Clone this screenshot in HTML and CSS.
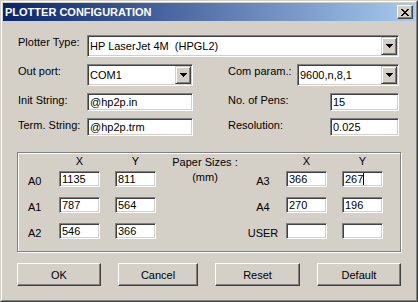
FILE: index.html
```html
<!DOCTYPE html>
<html>
<head>
<meta charset="utf-8">
<title>Plotter Configuration</title>
<link rel="stylesheet" href="styles.css">
</head>
<body>
<div class="window">
  <div class="frame">
    <div class="titlebar">
      <span class="title">PLOTTER CONFIGURATION</span>
      <span class="close">
        <svg width="8" height="7" viewBox="0 0 8 7" shape-rendering="crispEdges">
          <path d="M0 0h2v1h-2zM6 0h2v1h-2zM1 1h2v1h-2zM5 1h2v1h-2zM2 2h4v1h-4zM3 3h2v1h-2zM2 4h4v1h-4zM1 5h2v1h-2zM5 5h2v1h-2zM0 6h2v1h-2zM6 6h2v1h-2z" fill="#000"/>
        </svg>
      </span>
    </div>
    <div class="content">
      <div class="form">
        <span class="lbl c1">Plotter Type:</span>
        <div class="combo span">
          <span class="combo-text">HP LaserJet 4M&nbsp; (HPGL2)</span>
          <span class="drop"><svg width="7" height="4" viewBox="0 0 7 4" shape-rendering="crispEdges"><path d="M0 0h7v1h-7zM1 1h5v1h-5zM2 2h3v1h-3zM3 3h1v1h-1z" fill="#000"/></svg></span>
        </div>

        <span class="lbl c1">Out port:</span>
        <div class="combo c2">
          <span class="combo-text">COM1</span>
          <span class="drop"><svg width="7" height="4" viewBox="0 0 7 4" shape-rendering="crispEdges"><path d="M0 0h7v1h-7zM1 1h5v1h-5zM2 2h3v1h-3zM3 3h1v1h-1z" fill="#000"/></svg></span>
        </div>
        <span class="lbl c4">Com param.:</span>
        <div class="combo c5">
          <span class="combo-text">9600,n,8,1</span>
          <span class="drop"><svg width="7" height="4" viewBox="0 0 7 4" shape-rendering="crispEdges"><path d="M0 0h7v1h-7zM1 1h5v1h-5zM2 2h3v1h-3zM3 3h1v1h-1z" fill="#000"/></svg></span>
        </div>

        <span class="lbl c1">Init String:</span>
        <span class="field c2">@hp2p.in</span>
        <span class="lbl c4">No. of Pens:</span>
        <span class="field c5 short">15</span>

        <span class="lbl c1">Term. String:</span>
        <span class="field c2">@hp2p.trm</span>
        <span class="lbl c4">Resolution:</span>
        <span class="field c5 short">0.025</span>
      </div>

      <div class="group">
        <span class="hdr g2">X</span>
        <span class="hdr g3">Y</span>
        <span class="paper">Paper Sizes :<br>(mm)</span>
        <span class="hdr g6">X</span>
        <span class="hdr g7">Y</span>

        <span class="glbl g1 r2">A0</span>
        <span class="sfield g2 r2">1135</span>
        <span class="sfield g3 r2">811</span>
        <span class="glbl g5 r2">A3</span>
        <span class="sfield g6 r2">366</span>
        <span class="sfield g7 r2">267<span class="caret"></span></span>

        <span class="glbl g1 r3">A1</span>
        <span class="sfield g2 r3">787</span>
        <span class="sfield g3 r3">564</span>
        <span class="glbl g5 r3">A4</span>
        <span class="sfield g6 r3">270</span>
        <span class="sfield g7 r3">196</span>

        <span class="glbl g1 r4">A2</span>
        <span class="sfield g2 r4">546</span>
        <span class="sfield g3 r4">366</span>
        <span class="glbl g5 r4">USER</span>
        <span class="sfield g6 r4"></span>
        <span class="sfield g7 r4"></span>
      </div>

      <div class="buttons">
        <span class="btn w-ok">OK</span>
        <span class="btn w-cancel">Cancel</span>
        <span class="btn w-reset">Reset</span>
        <span class="btn w-default">Default</span>
      </div>
    </div>
  </div>
</div>
</body>
</html>
```
FILE: styles.css
```css
* { box-sizing: border-box; }
html, body { margin: 0; padding: 0; background: #d4d0c8; }
body {
  font-family: "Liberation Sans", Arial, sans-serif;
  font-size: 11px;
  color: #000;
}
.window {
  width: 418px;
  height: 302px;
  border: 1px solid;
  border-color: #d4d0c8 #404040 #404040 #d4d0c8;
  background: #d4d0c8;
}
.frame {
  height: 100%;
  border: 1px solid;
  border-color: #fff #808080 #808080 #fff;
  padding: 1px;
}
.titlebar {
  height: 18px;
  display: flex;
  align-items: center;
  justify-content: space-between;
  background: linear-gradient(to right, #0a246a, #a6caf0);
  padding: 0 2px;
}
.title {
  color: #fff;
  font-weight: bold;
  font-size: 11px;
  line-height: 13px;
  white-space: nowrap;
}
.close {
  width: 16px;
  height: 14px;
  display: flex;
  align-items: center;
  justify-content: center;
  background: #d4d0c8;
  border: 1px solid;
  border-color: #fff #404040 #404040 #fff;
  box-shadow: inset -1px -1px 0 #808080;
}
.content { padding: 14px 0 0 14px; }

.form {
  display: grid;
  grid-template-columns: 70px 106px 34px 70px 102px;
  grid-template-rows: 22px 22px 18px 18px;
  row-gap: 7px;
}
.c1 { grid-column: 1; }
.c2 { grid-column: 2; }
.c4 { grid-column: 4; }
.c5 { grid-column: 5; }
.span { grid-column: 2 / 6; }
.lbl {
  align-self: start;
  line-height: 13px;
  padding-top: 1px;
  padding-left: 1px;
  white-space: nowrap;
}
.combo {
  display: flex;
  height: 22px;
  background: #fff;
  border: 1px solid;
  border-color: #808080 #fff #fff #808080;
  box-shadow: inset 1px 1px 0 #404040, inset -1px -1px 0 #d4d0c8;
  padding: 1px;
}
.combo-text {
  flex: 1;
  line-height: 18px;
  padding-left: 1px;
  white-space: nowrap;
}
.drop {
  width: 16px;
  height: 18px;
  display: flex;
  align-items: center;
  justify-content: center;
  background: #d4d0c8;
  border: 1px solid;
  border-color: #d4d0c8 #404040 #404040 #d4d0c8;
  box-shadow: inset 1px 1px 0 #fff, inset -1px -1px 0 #808080;
}
.field, .sfield {
  display: block;
  background: #fff;
  border: 1px solid;
  border-color: #808080 #fff #fff #808080;
  box-shadow: inset 1px 1px 0 #404040, inset -1px -1px 0 #d4d0c8;
  padding-left: 2px;
  white-space: nowrap;
}
.field { height: 18px; line-height: 16px; }
.short { width: 69px; justify-self: end; }

.group {
  margin-top: 16px;
  width: 384px;
  height: 100px;
  border: 1px solid #808080;
  box-shadow: 1px 1px 0 #fff, inset 1px 1px 0 #fff;
  padding: 2px 0 0 10px;
  display: grid;
  grid-template-columns: 31px 41px 56px 90px 40px 41px 56px;
  grid-template-rows: 16px 26px 26px 16px;
}
.g1 { grid-column: 1; }
.g2 { grid-column: 2; }
.g3 { grid-column: 3; justify-self: end; width: 41px; }
.g5 { grid-column: 5; }
.g6 { grid-column: 6; }
.g7 { grid-column: 7; justify-self: end; width: 41px; }
.r2 { grid-row: 2; }
.r3 { grid-row: 3; }
.r4 { grid-row: 4; }
.hdr {
  text-align: center;
  line-height: 13px;
  grid-row: 1;
}
.paper {
  grid-column: 4;
  grid-row: 1 / 3;
  text-align: center;
  line-height: 15px;
  padding-left: 8px;
  white-space: nowrap;
}
.glbl {
  align-self: start;
  line-height: 16px;
  padding-top: 2px;
  white-space: nowrap;
}
.g5.glbl { text-align: center; padding-right: 6px; }
.sfield {
  align-self: start;
  width: 41px;
  height: 16px;
  line-height: 14px;
}
.caret {
  display: inline-block;
  width: 1px;
  height: 12px;
  background: #000;
  vertical-align: -2px;
}

.buttons {
  display: flex;
  gap: 17px;
  margin-top: 11px;
}
.btn {
  height: 23px;
  display: flex;
  align-items: center;
  justify-content: center;
  border: 1px solid;
  border-color: #fff #404040 #404040 #fff;
  box-shadow: inset -1px -1px 0 #808080;
}
.w-ok { width: 84px; }
.w-cancel { width: 80px; }
.w-reset { width: 85px; }
.w-default { width: 84px; }
```
